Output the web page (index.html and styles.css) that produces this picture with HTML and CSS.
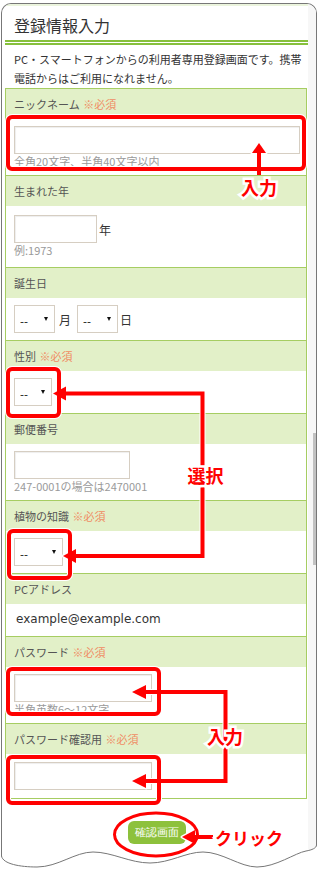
FILE: index.html
```html
<!DOCTYPE html>
<html lang="ja">
<head>
<meta charset="UTF-8">
<meta name="viewport" content="width=device-width, initial-scale=1.0">
<title>登録情報入力</title>
<link rel="stylesheet" href="styles.css">
</head>
<body>
<div class="page">
  <div class="frame">
    <div class="main">
      <h1 class="title">登録情報入力</h1>
      <p class="lead">PC・スマートフォンからの利用者専用登録画面です。携帯電話からはご利用になれません。</p>

      <div class="form">
        <div class="field">
          <div class="field-head">ニックネーム <span class="req">※必須</span></div>
          <div class="field-body">
            <input type="text" class="txt txt-nick">
            <div class="hint">全角20文字、半角40文字以内</div>
          </div>
        </div>

        <div class="field">
          <div class="field-head">生まれた年</div>
          <div class="field-body field-body-year">
            <div class="inline">
              <input type="text" class="txt txt-year">
              <span class="unit">年</span>
            </div>
            <div class="hint">例:1973</div>
          </div>
        </div>

        <div class="field">
          <div class="field-head">誕生日</div>
          <div class="field-body">
            <div class="inline">
              <span class="sel sel-day"><select><option>--</option></select></span>
              <span class="unit unit-month">月</span>
              <span class="sel sel-day"><select><option>--</option></select></span>
              <span class="unit">日</span>
            </div>
          </div>
        </div>

        <div class="field">
          <div class="field-head">性別 <span class="req">※必須</span></div>
          <div class="field-body">
            <span class="sel sel-sex"><select><option>--</option></select></span>
          </div>
        </div>

        <div class="field">
          <div class="field-head">郵便番号</div>
          <div class="field-body">
            <input type="text" class="txt txt-zip">
            <div class="hint">247-0001の場合は2470001</div>
          </div>
        </div>

        <div class="field">
          <div class="field-head">植物の知識 <span class="req">※必須</span></div>
          <div class="field-body">
            <span class="sel sel-plant"><select><option>--</option></select></span>
          </div>
        </div>

        <div class="field">
          <div class="field-head">PCアドレス</div>
          <div class="field-body field-body-mail">example@example.com</div>
        </div>

        <div class="field">
          <div class="field-head">パスワード <span class="req">※必須</span></div>
          <div class="field-body">
            <input type="password" class="txt txt-pass">
            <div class="hint">半角英数6～12文字</div>
          </div>
        </div>

        <div class="field">
          <div class="field-head">パスワード確認用 <span class="req">※必須</span></div>
          <div class="field-body field-body-last">
            <input type="password" class="txt txt-pass">
          </div>
        </div>
      </div>

      <div class="actions">
        <button class="btn-confirm">確認画面</button>
      </div>
    </div>
    <div class="scrollbar"><div class="thumb"></div></div>
  </div>

  <!-- torn bottom edge -->
  <svg class="tear" width="317" height="30" viewBox="0 0 317 30">
    <path class="tear-fill" d="M0 16 H1.5 C3 24, 20 27, 37 27 C58 27, 75 12, 93 12 C112 12, 130 23, 150 23 C170 23, 186 12, 203 12 C222 12, 240 27, 257 27 C276 27, 295 13, 306 11 C312 10, 316.5 8, 316.5 5 H317 V30 H0 Z"/>
    <path class="tear-line" d="M1.5 10 V16 C3 24, 20 27, 37 27 C58 27, 75 12, 93 12 C112 12, 130 23, 150 23 C170 23, 186 12, 203 12 C222 12, 240 27, 257 27 C276 27, 295 13, 306 11 C312 10, 316.5 8, 316.5 5 V0"/>
  </svg>

  <!-- red annotations -->
  <svg class="notes" width="317" height="870" viewBox="0 0 317 870">
    <defs>
      <g id="marks">
        <rect x="8" y="117" width="296" height="52" rx="4"/>
        <rect x="8" y="369" width="51" height="47" rx="4"/>
        <rect x="9" y="531" width="61" height="47" rx="4"/>
        <rect x="8" y="669" width="151" height="45" rx="4"/>
        <rect x="8" y="757" width="151" height="46" rx="4"/>
        <path d="M259 175 V150"/>
        <path d="M64 393.5 H202.5 V556 H74"/>
        <path d="M145 692 H225.5 V781 H145"/>
        <path d="M193 837 H213"/>
      </g>
      <g id="heads">
        <polygon points="259,143 252,153 266,153"/>
        <polygon points="53,393.5 66,386.5 66,400.5"/>
        <polygon points="63,556 76,549 76,563"/>
        <polygon points="132,692 146,685 146,699"/>
        <polygon points="132,781 146,774 146,788"/>
        <polygon points="182,837 195,830 195,844"/>
      </g>
    </defs>
    <use href="#marks" class="halo"/>
    <use href="#heads" class="halo-fill"/>
    <ellipse class="halo" cx="156" cy="834.5" rx="41.5" ry="21.5"/>
    <use href="#marks" class="ink"/>
    <use href="#heads" class="ink-fill"/>
    <ellipse class="ink ink-thin" cx="156" cy="834.5" rx="41.5" ry="21.5"/>

    <text class="note-text" x="259" y="187">入力</text>
    <text class="note-text" x="205.5" y="475">選択</text>
    <text class="note-text" x="225" y="736">入力</text>
    <text class="note-text note-left" x="215" y="837">クリック</text>
  </svg>
</div>
</body>
</html>
```

FILE: styles.css
```css
body {
  margin: 0;
  background-color: #ffffff;
  font-family: "Noto Sans CJK JP", "Noto Sans", sans-serif;
  color: #333;
}

.page {
  position: relative;
  width: 317px;
  height: 870px;
  overflow: hidden;
}

.frame {
  display: flex;
  margin: 3px 0 0 1px;
  width: 316px;
  height: 867px;
  box-sizing: border-box;
  border: 1px solid #777;
  border-bottom: none;
  border-radius: 10px 10px 0 0;
  overflow: hidden;
}

.main {
  width: 306px;
  padding-left: 3px;
  box-sizing: border-box;
  border-top: 2px solid #ebf4dd;
}

.title {
  margin: 0;
  padding: 7px 0 3px 9px;
  font-size: 16px;
  font-weight: normal;
  line-height: 24px;
  color: #333;
  border-bottom: 5px double #86c03c;
}

.lead {
  margin: 5px 0 0;
  padding-left: 9px;
  font-size: 11px;
  line-height: 19px;
  color: #333;
}

/* フォーム本体 */
.form {
  width: 302px;
  box-sizing: border-box;
  border: 1px solid #a6cd62;
}

.field + .field {
  border-top: 1px solid #a6cd62;
}

.field-head {
  height: 30px;
  line-height: 30px;
  padding: 0 8px;
  background-color: #e2f0c8;
  font-size: 11px;
  color: #555;
}

.req {
  margin-left: 1px;
  color: #f08c64;
}

.field-body {
  padding: 7px 8px 7px;
  background-color: #fff;
}

.field-body-year {
  padding: 9px 8px 10px;
}

.field-body-last {
  padding: 8px 8px 8px;
}

.field-body-mail {
  padding: 6px 10px 7px;
  font-family: "DejaVu Sans", sans-serif;
  font-size: 12px;
  line-height: 19px;
  color: #333;
}

.txt {
  display: block;
  height: 28px;
  margin: 0;
  padding: 0 4px;
  box-sizing: border-box;
  border: 1px solid #d6cec2;
  box-shadow: inset 1px 1px 1px rgba(0, 0, 0, 0.07);
  background: #fff;
}

.txt-nick { width: 286px; }
.txt-year { width: 83px; }
.txt-zip { width: 116px; }
.txt-pass { width: 138px; }

.hint {
  font-size: 11px;
  line-height: 14px;
  color: #9a9a9a;
}

.inline {
  display: flex;
  align-items: center;
}

.unit {
  margin: 0 3px 0 2px;
  font-size: 12px;
  color: #333;
}

.unit-month {
  margin: 0 6px 0 4px;
}

/* セレクト */
.sel {
  position: relative;
  display: inline-block;
  height: 28px;
  box-sizing: border-box;
  border: 1px solid #d6cec2;
  background: #fff;
  vertical-align: top;
}

.sel select {
  appearance: none;
  -webkit-appearance: none;
  width: 100%;
  height: 100%;
  margin: 0;
  padding: 0 0 0 5px;
  border: none;
  background: transparent;
  font-family: "DejaVu Sans", sans-serif;
  font-size: 11px;
  color: #222;
}

.sel::after {
  content: "";
  position: absolute;
  right: 6px;
  top: 11px;
  border-left: 2.5px solid transparent;
  border-right: 2.5px solid transparent;
  border-top: 4px solid #111;
}

.sel-day { width: 41px; }
.sel-sex { width: 38px; }
.sel-plant { width: 49px; }

.actions {
  display: flex;
  justify-content: center;
  padding-top: 22px;
}

.btn-confirm {
  height: 23px;
  padding: 0 7px;
  border: none;
  border-radius: 6px;
  background-color: #8dc13c;
  color: #fff;
  font-family: serif;
  font-size: 11px;
  cursor: pointer;
}

.scrollbar {
  width: 8px;
  background-color: #f7f7f7;
}

.thumb {
  width: 3px;
  height: 132px;
  margin: 429px 0 0 5px;
  background-color: #c2c2c2;
}

/* 破れ目 */
.tear {
  position: absolute;
  left: 0;
  bottom: 0;
}

.tear-fill {
  fill: #fff;
}

.tear-line {
  fill: none;
  stroke: #777;
  stroke-width: 1;
}

/* 注釈 */
.notes {
  position: absolute;
  left: 0;
  top: 0;
  pointer-events: none;
}

.halo {
  fill: none;
  stroke: #fff;
  stroke-width: 6;
  stroke-linejoin: round;
}

.halo-fill {
  fill: #fff;
  stroke: #fff;
  stroke-width: 3;
  stroke-linejoin: round;
}

.ink {
  fill: none;
  stroke: #ff0000;
  stroke-width: 4;
}

.ink-thin {
  stroke-width: 3;
}

.ink-fill {
  fill: #ff0000;
}

.note-text {
  font-family: "Noto Sans CJK JP", sans-serif;
  font-weight: bold;
  font-size: 18px;
  fill: #ff0000;
  stroke: #fff;
  stroke-width: 5;
  paint-order: stroke;
  text-anchor: middle;
  dominant-baseline: central;
}

.note-left {
  text-anchor: start;
  font-size: 17px;
}
```
